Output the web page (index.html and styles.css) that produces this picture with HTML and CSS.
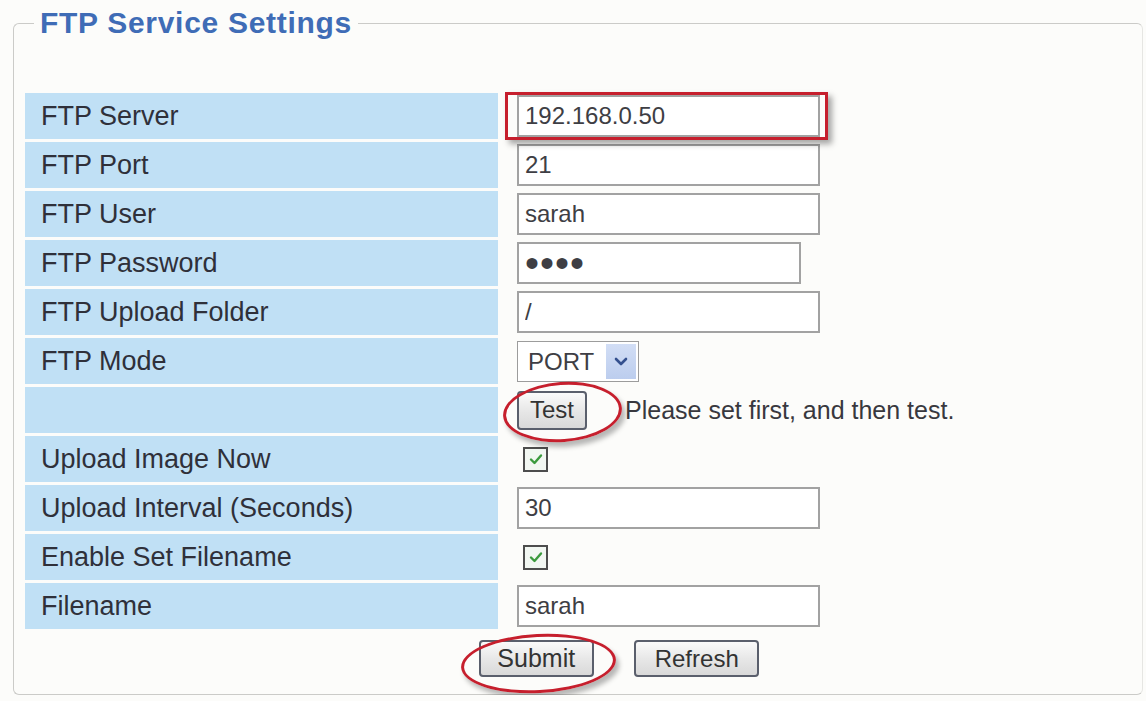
FILE: index.html
```html
<!DOCTYPE html>
<html lang="en">
<head>
    <meta charset="UTF-8">
    <title>FTP Service Settings</title>
    <link rel="stylesheet" href="styles.css">
</head>
<body>
    <fieldset class="panel">
        <legend class="panel-title">FTP Service Settings</legend>

        <table class="settings">
            <tr>
                <td class="label">FTP Server</td>
                <td class="field">
                    <span class="mark-box"><input type="text" class="text-input" value="192.168.0.50"></span>
                </td>
            </tr>
            <tr>
                <td class="label">FTP Port</td>
                <td class="field"><input type="text" class="text-input" value="21"></td>
            </tr>
            <tr>
                <td class="label">FTP User</td>
                <td class="field"><input type="text" class="text-input" value="sarah"></td>
            </tr>
            <tr>
                <td class="label">FTP Password</td>
                <td class="field"><input type="password" class="text-input password" value="abcd"></td>
            </tr>
            <tr>
                <td class="label">FTP Upload Folder</td>
                <td class="field"><input type="text" class="text-input" value="/"></td>
            </tr>
            <tr>
                <td class="label">FTP Mode</td>
                <td class="field">
                    <div class="select-box">
                        <select class="select">
                            <option>PORT</option>
                            <option>PASV</option>
                        </select>
                        <span class="select-arrow">
                            <svg width="14" height="9" viewBox="0 0 14 9">
                                <path d="M2 2 L7 7 L12 2" fill="none" stroke="#34508e" stroke-width="2.6" stroke-linecap="round" stroke-linejoin="round"/>
                            </svg>
                        </span>
                    </div>
                </td>
            </tr>
            <tr>
                <td class="label"></td>
                <td class="field">
                    <div class="test-line">
                        <span class="mark-ring ring-test"><button class="btn btn-test">Test</button></span>
                        <span class="hint">Please set first, and then test.</span>
                    </div>
                </td>
            </tr>
            <tr>
                <td class="label">Upload Image Now</td>
                <td class="field">
                    <span class="checkbox">
                        <svg width="14" height="12" viewBox="0 0 14 12">
                            <path d="M2 6.5 L5.5 10 L12 2.5" fill="none" stroke="#3b9a3d" stroke-width="2.4" stroke-linecap="round" stroke-linejoin="round"/>
                        </svg>
                    </span>
                </td>
            </tr>
            <tr>
                <td class="label">Upload Interval (Seconds)</td>
                <td class="field"><input type="text" class="text-input" value="30"></td>
            </tr>
            <tr>
                <td class="label">Enable Set Filename</td>
                <td class="field">
                    <span class="checkbox">
                        <svg width="14" height="12" viewBox="0 0 14 12">
                            <path d="M2 6.5 L5.5 10 L12 2.5" fill="none" stroke="#3b9a3d" stroke-width="2.4" stroke-linecap="round" stroke-linejoin="round"/>
                        </svg>
                    </span>
                </td>
            </tr>
            <tr>
                <td class="label">Filename</td>
                <td class="field"><input type="text" class="text-input" value="sarah"></td>
            </tr>
            <tr>
                <td class="actions" colspan="2">
                    <span class="mark-ring ring-submit"><button class="btn btn-submit">Submit</button></span>
                    <button class="btn btn-refresh">Refresh</button>
                </td>
            </tr>
        </table>
    </fieldset>
</body>
</html>
```

FILE: styles.css
```css
:root {
    --label-bg: #c0e0f5;
    --label-text: #2f303a;
    --field-text: #3e3e44;
    --field-border: #a2a2a2;
    --title-color: #3f6cb6;
    --mark-red: #c61f2d;
}

* {
    box-sizing: border-box;
}

body {
    margin: 0;
    background-color: #fcfcfa;
    font-family: 'Liberation Sans', Arial, sans-serif;
    color: var(--label-text);
}

/* outer group box */
.panel {
    width: 1130px;
    margin: 6px 0 0 13px;
    padding: 50px 0 10px 11px;
    border: 1px solid #cbcbc8;
    border-right-color: #e6e6e3;
    border-radius: 6px;
}

.panel-title {
    margin-left: 9px;
    padding: 0 6px;
    font-size: 30px;
    line-height: 34px;
    font-weight: bold;
    letter-spacing: 0.7px;
    color: var(--title-color);
}

.settings {
    width: 1105px;
    border-collapse: separate;
    border-spacing: 0 3px;
}

.label {
    width: 473px;
    height: 46px;
    padding: 0 0 0 16px;
    background-color: var(--label-bg);
    font-size: 27px;
    white-space: nowrap;
}

.field {
    padding: 0 0 0 19px;
    vertical-align: middle;
}

.text-input {
    display: block;
    width: 303px;
    height: 42px;
    padding: 0 6px;
    border: 2px solid var(--field-border);
    background: #fff;
    font-family: inherit;
    font-size: 24px;
    color: var(--field-text);
    outline: none;
}

.password {
    width: 284px;
    font-size: 40px;
    letter-spacing: 1px;
}

/* red annotation round the server address */
.mark-box {
    position: relative;
    display: inline-block;
    vertical-align: middle;
}

.mark-box::after {
    content: "";
    position: absolute;
    top: -3px;
    right: -8px;
    bottom: -3px;
    left: -12px;
    border: 3px solid var(--mark-red);
    box-shadow: 4px 4px 6px rgba(0, 0, 0, 0.35);
    pointer-events: none;
}

/* hand-drawn style rings round buttons */
.mark-ring {
    position: relative;
    display: inline-block;
    vertical-align: middle;
}

.mark-ring::after {
    content: "";
    position: absolute;
    border: 3px solid var(--mark-red);
    border-radius: 50%;
    box-shadow: 3px 5px 5px rgba(0, 0, 0, 0.28);
    pointer-events: none;
}

.ring-test::after {
    top: -9px;
    right: -35px;
    bottom: -12px;
    left: -14px;
    transform: rotate(-4deg);
}

.ring-submit::after {
    top: -6px;
    right: -22px;
    bottom: -16px;
    left: -18px;
    transform: rotate(-3deg);
}

.select-box {
    display: flex;
    align-items: center;
    width: 122px;
    height: 41px;
    padding: 2px;
    border: 1px solid #9c9c9c;
    background: #fff;
}

.select {
    flex: 1;
    height: 100%;
    padding: 0 0 0 8px;
    border: none;
    background: transparent;
    font-family: inherit;
    font-size: 24px;
    color: var(--field-text);
    appearance: none;
    outline: none;
}

.select-arrow {
    display: flex;
    align-items: center;
    justify-content: center;
    width: 30px;
    height: 100%;
    background: linear-gradient(#d2def5, #bccdee);
}

.test-line {
    display: flex;
    align-items: center;
}

.hint {
    margin-left: 38px;
    font-size: 25px;
    color: #38383e;
}

.btn {
    display: block;
    padding: 0;
    border: 2px solid #5a5f6c;
    border-radius: 4px;
    background: linear-gradient(#fafafa, #e6e6e6 55%, #d9d9d9);
    font-family: inherit;
    font-size: 24px;
    color: #333;
    cursor: pointer;
}

.btn-test {
    width: 70px;
    height: 39px;
}

.checkbox {
    display: flex;
    align-items: center;
    justify-content: center;
    width: 25px;
    height: 25px;
    margin-left: 6px;
    border: 2px solid #4d4d4d;
    background: #f2f7f2;
}

.actions {
    padding: 8px 0 4px 83px;
    text-align: center;
}

.actions .btn {
    display: inline-block;
    height: 37px;
    vertical-align: middle;
}

.btn-submit {
    width: 115px;
    font-size: 25px;
}

.btn-refresh {
    width: 125px;
    margin-left: 36px;
}
```
